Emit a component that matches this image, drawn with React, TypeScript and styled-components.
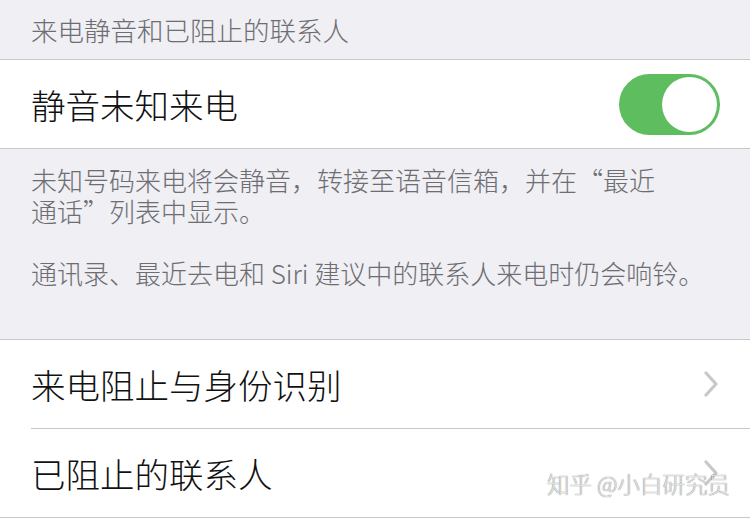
import React from 'react'
import styled, {createGlobalStyle} from 'styled-components'

const GlobalStyle = createGlobalStyle`
  html, body {
    margin: 0;
    padding: 0;
    background: #efeff4;
    font-family: "Noto Sans CJK SC", "Noto Sans", sans-serif;
    font-weight: 300;
    overflow: hidden;
  }
`

const Page = styled.div`
  position: relative;
  width: 750px;
  height: 518px;
  overflow: hidden;
  background: #efeff4;
`

const SectionHeader = styled.div`
  height: 59px;
  padding-left: 31px;
  display: flex;
  align-items: center;
  font-size: 26.5px;
  color: #6d6d72;
  border-bottom: 1px solid #c8c7cc;
`

const Group = styled.div`
  background: #fff;
  border-bottom: 1px solid #c8c7cc;
`

const TopGroup = styled(Group)`
  border-top: 1px solid #c8c7cc;
`

const Row = styled.div<{$divider?: boolean}>`
  height: 88px;
  margin-left: 31px;
  padding-right: 31px;
  display: flex;
  align-items: center;
  justify-content: space-between;
  border-bottom: ${p => (p.$divider ? '1px solid #c8c7cc' : 'none')};
`

const RowLabel = styled.div`
  font-size: 34.5px;
  color: #111;
  line-height: 1;
`

const Toggle = styled.div<{$on: boolean}>`
  position: relative;
  flex: none;
  width: 101px;
  height: 61px;
  margin-right: -1px;
  border-radius: 31px;
  background: ${p => (p.$on ? '#5dbd5f' : '#e5e5ea')};
`

const Knob = styled.div<{$on: boolean}>`
  position: absolute;
  top: 3px;
  ${p => (p.$on ? 'right: 3px;' : 'left: 3px;')}
  width: 55px;
  height: 55px;
  border-radius: 50%;
  background: #fff;
`

const Footer = styled.div`
  padding: 15px 31px 51px;
  font-size: 26px;
  line-height: 31px;
  color: #6d6d72;
  p {
    margin: 0;
  }
  p + p {
    margin-top: 31px;
  }
`

const Chevron = () => (
  <svg width="16" height="26" viewBox="0 0 16 26" fill="none">
    <polyline
      points="3,2 13,13 3,24"
      stroke="#c7c7cc"
      strokeWidth="3.2"
      strokeLinecap="round"
      strokeLinejoin="round"
    />
  </svg>
)

const Watermark = styled.div`
  position: absolute;
  right: 20px;
  bottom: 19px;
  font-size: 22.5px;
  color: rgba(244, 244, 244, 0.9);
  text-shadow: 0 0 1px rgba(0, 0, 0, 0.5), 0 0 1px rgba(0, 0, 0, 0.3);
  white-space: nowrap;
`

export default function App() {
  return (
    <Page>
      <GlobalStyle/>
      <SectionHeader>来电静音和已阻止的联系人</SectionHeader>
      <Group>
        <Row>
          <RowLabel>静音未知来电</RowLabel>
          <Toggle $on>
            <Knob $on/>
          </Toggle>
        </Row>
      </Group>
      <Footer>
        <p>未知号码来电将会静音，转接至语音信箱，并在“最近<br/>通话”列表中显示。</p>
        <p>通讯录、最近去电和 Siri 建议中的联系人来电时仍会响铃。</p>
      </Footer>
      <TopGroup>
        <Row $divider>
          <RowLabel>来电阻止与身份识别</RowLabel>
          <Chevron/>
        </Row>
        <Row>
          <RowLabel>已阻止的联系人</RowLabel>
          <Chevron/>
        </Row>
      </TopGroup>
      <Watermark>知乎 @小白研究员</Watermark>
    </Page>
  )
}
